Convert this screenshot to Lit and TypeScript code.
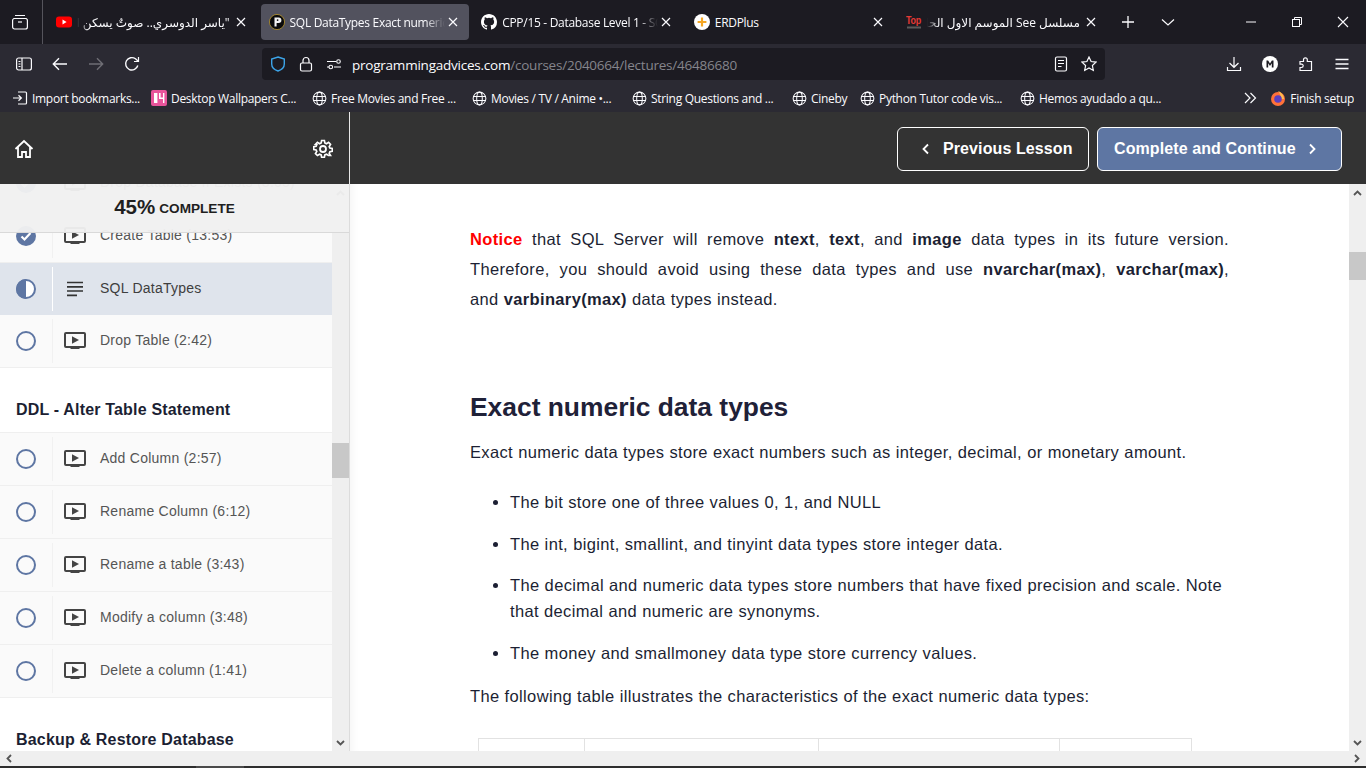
import { LitElement, html, css, svg } from 'lit'
import { customElement } from 'lit/decorators.js'

const globe = html`<svg class="fav globe" viewBox="0 0 16 16" fill="none" stroke="#fbfbfe" stroke-width="1.1"><circle cx="8" cy="8" r="6.8"/><ellipse cx="8" cy="8" rx="3" ry="6.8"/><path d="M1.4 5.800h13.200M1.400 10.200h13.200"/></svg>`
const closeX = html`<svg class="x" viewBox="0 0 10 10" fill="none" stroke="#fbfbfe" stroke-width="1.2"><path d="M1 1l8 8M9 1l-8 8"/></svg>`

const ytIcon = html`<svg class="fav" viewBox="0 0 16 16"><rect y="2.500" width="16" height="11" rx="3" fill="#f00"/><path d="M6.500 5.600v4.800L10.600 8z" fill="#fff"/></svg>`
const paIcon = html`<svg class="fav" viewBox="0 0 16 16"><circle cx="8" cy="8" r="7.600" fill="#0b0b0b" stroke="#b8962e" stroke-width=".8"/><path d="M5.500 3.500h4.200a2.600 2.600 0 010 5.400H7.600v3.600H5.500z" fill="#f2f2f2"/><circle cx="8.600" cy="6.100" r=".9" fill="#0b0b0b"/></svg>`
const ghIcon = html`<svg class="fav" viewBox="0 0 16 16" fill="#fff"><path d="M8 0C3.580 0 0 3.580 0 8c0 3.540 2.290 6.530 5.470 7.590.4.070.55-.17.55-.38 0-.19-.01-.82-.01-1.490-2.010.37-2.530-.49-2.690-.94-.09-.23-.48-.94-.82-1.130-.28-.15-.68-.52-.01-.53.63-.01 1.080.58 1.230.82.72 1.210 1.870.87 2.330.66.07-.52.28-.87.51-1.070-1.780-.2-3.640-.89-3.640-3.950 0-.87.31-1.590.82-2.150-.08-.2-.36-1.020.08-2.120 0 0 .67-.21 2.200.82a7.400 7.400 0 014 0c1.530-1.040 2.200-.82 2.200-.82.44 1.100.16 1.920.08 2.120.51.56.82 1.270.82 2.150 0 3.070-1.870 3.750-3.650 3.950.29.25.54.73.54 1.480 0 1.070-.01 1.930-.01 2.200 0 .21.15.46.55.38A8.010 8.010 0 0016 8c0-4.420-3.580-8-8-8z"/></svg>`
const erdIcon = html`<svg class="fav" viewBox="0 0 16 16"><circle cx="8" cy="8" r="8" fill="#fff"/><path d="M8 3.600v8.800M3.600 8h8.800" stroke="#f5a623" stroke-width="2.200"/></svg>`
const topIcon = html`<svg class="fav" viewBox="0 0 16 16"><text x="0" y="10" font-family="Liberation Sans" font-weight="700" font-size="11" fill="#e53935" textLength="15" lengthAdjust="spacingAndGlyphs">Top</text><rect x="1" y="12.500" width="14" height="2" fill="#5a5a5a"/></svg>`

const tabs = [
  { icon: ytIcon, title: '"ياسر الدوسري.. صوتٌ يسكن القلوب', rtl: true },
  { icon: paIcon, title: 'SQL DataTypes Exact numeric data types', active: true },
  { icon: ghIcon, title: 'CPP/15 - Database Level 1 - SQL Concepts' },
  { icon: erdIcon, title: 'ERDPlus' },
  { icon: topIcon, title: 'مسلسل See الموسم الاول الحلقة الاولى', rtl: true },
]

const marks = [
  { icon: html`<svg class="fav" viewBox="0 0 16 16" fill="none" stroke="#fbfbfe" stroke-width="1.2"><path d="M6 2h7.500a1 1 0 011 1v10a1 1 0 01-1 1H6M1 8h8M6.500 5.200L9.400 8l-2.900 2.800"/></svg>`, label: 'Import bookmarks...', w: 139 },
  { icon: html`<svg class="fav" viewBox="0 0 16 16"><rect width="16" height="16" rx="2" fill="#e8549b"/><path d="M3 3h3.400v10H3zM8 3h1.600v4.500H12V3h1.400v10H12V9H8z" fill="#fff"/></svg>`, label: 'Desktop Wallpapers C...', w: 161 },
  { icon: globe, label: 'Free Movies and Free ...', w: 160 },
  { icon: globe, label: 'Movies / TV / Anime •...', w: 160 },
  { icon: globe, label: 'String Questions and ...', w: 160 },
  { icon: globe, label: 'Cineby', w: 68 },
  { icon: globe, label: 'Python Tutor code vis...', w: 160 },
  { icon: globe, label: 'Hemos ayudado a qu...', w: 160 },
]

const playIcon = html`<svg class="lesson-icon" viewBox="0 0 22 20"><path d="M2 2h18a1 1 0 011 1v12a1 1 0 01-1 1H2a1 1 0 01-1-1V3a1 1 0 011-1z" fill="none" stroke="#444" stroke-width="2"/><path d="M8 5.200v7.600L15 9z" fill="#444"/><rect x="6.500" y="16" width="9" height="2" fill="#444"/></svg>`
const textIcon = html`<svg class="lesson-icon" viewBox="0 0 22 20"><path d="M3 3.500h16M3 7.800h16M3 12h16M3 16.300h10" stroke="#333" stroke-width="1.700"/></svg>`

type Lesson = { title: string; state?: 'done' | 'half'; kind?: 'text'; current?: boolean }

const statusIcon = (state?: string) => svg`<svg class="status" viewBox="0 0 20 20">
  ${state === 'done'
    ? svg`<circle cx="10" cy="10" r="10" fill="#5e76a3"/><path d="M5.500 10.500l3 3 6-6.500" fill="none" stroke="#fff" stroke-width="2.200"/>`
    : state === 'half'
      ? svg`<circle cx="10" cy="10" r="9" fill="#fff" stroke="#5e76a3" stroke-width="2"/><path d="M10 0a10 10 0 000 20z" fill="#5e76a3"/>`
      : svg`<circle cx="10" cy="10" r="9" fill="none" stroke="#5e76a3" stroke-width="2"/>`}
</svg>`

const firstGroup: Lesson[] = [
  { title: 'Drop Database If Exists (3:05)', state: 'done' },
  { title: 'Create Table (13:53)', state: 'done' },
  { title: 'SQL DataTypes', state: 'half', kind: 'text', current: true },
  { title: 'Drop Table (2:42)' },
]
const alterGroup: Lesson[] = [
  { title: 'Add Column (2:57)' },
  { title: 'Rename Column (6:12)' },
  { title: 'Rename a table (3:43)' },
  { title: 'Modify a column (3:48)' },
  { title: 'Delete a column (1:41)' },
]

@customElement('app-root')
export class AppRoot extends LitElement {
  static styles = css`
    :host {
      display: flex;
      flex-direction: column;
      width: 1366px;
      height: 768px;
      overflow: hidden;
      font-family: 'Liberation Sans', Arial, sans-serif;
      background: #fff;
    }
    svg { flex: none; display: block; }

    /* browser chrome */
    .chrome { font-family: 'Open Sans', 'Noto Sans', 'DejaVu Sans', sans-serif; color: #fbfbfe; font-size: 12px; letter-spacing: -.3px; }
    .tabbar { height: 44px; background: #1c1b22; display: flex; align-items: center; }
    .tab-view { width: 43px; height: 44px; display: flex; align-items: center; justify-content: center; border-right: 1px solid #55545c; box-sizing: border-box; padding-right: 2px; }
    .tab-view svg { width: 16px; height: 16px; }
    .tabs { display: flex; margin-left: 5px; }
    .tab { width: 212.600px; height: 36px; box-sizing: border-box; padding: 0 12px 0 8px; display: flex; align-items: center; gap: 5px; border-radius: 4px; }
    .tab.active { background: #52525e; margin-right: 4.600px; width: 208px; padding-right: 8px; }
    .fav { width: 16px; height: 16px; }
    .tab .title { flex: 1; white-space: nowrap; overflow: hidden; min-width: 0; -webkit-mask-image: linear-gradient(to left, transparent, #000 20px); mask-image: linear-gradient(to left, transparent, #000 20px); }
    .tab .title.rtl { direction: rtl; letter-spacing: 0; text-align: right; padding-right: 3px; -webkit-mask-image: linear-gradient(to right, transparent, #000 12px); mask-image: linear-gradient(to right, transparent, #000 12px); }
    .tab .title.short { -webkit-mask-image: none; mask-image: none; }
    .x { width: 10px; height: 10px; margin: 0 3px 0 -2px; }
    .tab-actions { display: flex; align-items: center; gap: 26px; margin-left: 10px; }
    .tab-actions svg { width: 14px; height: 14px; }
    .win { margin-left: auto; display: flex; }
    .win div { width: 46px; height: 44px; display: flex; align-items: center; justify-content: center; }
    .win svg { width: 12px; height: 12px; }

    .toolbar { height: 40px; background: #2b2a33; display: flex; align-items: center; }
    .nav { display: flex; align-items: center; width: 262px; padding-left: 16px; box-sizing: border-box; gap: 20px; }
    .nav svg { width: 16px; height: 16px; }
    .url { width: 843px; height: 32px; box-sizing: border-box; background: #1c1b22; border-radius: 4px; display: flex; align-items: center; padding: 0 8px; font-size: 13.500px; letter-spacing: -.23px; }
    .url .left { display: flex; align-items: center; gap: 12px; margin-right: 10px; }
    .url svg { width: 16px; height: 16px; }
    .address { padding-top: 1px; }
    .host { color: #fbfbfe; }
    .path { color: #85858c; }
    .url .right { margin-left: auto; display: flex; align-items: center; gap: 12px; }
    .tools { flex: 1; display: flex; justify-content: flex-end; gap: 20px; padding-right: 16px; align-items: center; }
    .tools svg { width: 16px; height: 16px; }

    .bookmarks { height: 28px; background: #2b2a33; display: flex; align-items: center; padding-left: 12px; }
    .mark { display: flex; align-items: center; gap: 4px; white-space: nowrap; overflow: hidden; }
    .marks-end { margin-left: auto; display: flex; align-items: center; padding-right: 12px; gap: 12px; }
    .mark .fav { width: 16px; height: 16px; }
    .mark .globe { width: 15px; height: 15px; }

    /* course header */
    .top { height: 72px; flex: none; background: #333; display: flex; }
    .side-top { width: 350px; box-sizing: border-box; border-right: 1px solid #e8e8e8; display: flex; align-items: center; justify-content: space-between; padding: 2px 16px 0 14px; }
    .side-top svg { width: 20px; height: 20px; }
    .top-btns { flex: 1; display: flex; justify-content: flex-end; align-items: center; gap: 8px; padding-right: 24px; padding-top: 2px; }
    .btn { height: 44px; box-sizing: border-box; border: 1px solid #fff; border-radius: 6px; display: flex; align-items: center; color: #fff; font-weight: 700; font-size: 16px; letter-spacing: .1px; }
    .btn svg { width: 10px; height: 12px; }
    .btn.prev { width: 192px; padding-left: 23px; gap: 12px; }
    .btn.next { width: 245px; background: #5e76a3; padding-left: 16px; gap: 11px; }

    /* body */
    .body { flex: 1; min-height: 0; display: flex; }
    .side { width: 350px; box-sizing: border-box; border-right: 1px solid #dcdcdc; display: flex; position: relative; overflow: hidden; }
    .list { width: 332px; flex: none; overflow: hidden; }
    .list-inner { margin-top: -27px; }
    .progress { position: absolute; left: 0; top: 0; width: 349px; height: 49px; box-sizing: border-box; background: rgba(240, 240, 240, .96); border-bottom: 1px solid #d9d9d9; display: flex; align-items: center; justify-content: center; gap: 4px; font-weight: 700; color: #1f1f1f; font-size: 20.500px; padding-bottom: 2px; }
    .progress small { font-size: 13.600px; margin-top: 3px; }
    .row { height: 53px; box-sizing: border-box; background: #fafafa; border-bottom: 1px solid #efefef; display: flex; align-items: center; color: #555; font-size: 14px; letter-spacing: .25px; }
    .row.current { height: 52px; background: #dfe4ec; color: #3e3e3e; border-bottom-color: #dfe4ec; }
    .row span { margin-bottom: 2px; }
    .status-cell { width: 53px; height: 44px; box-sizing: border-box; border-right: 1px solid #f1f1f1; display: flex; align-items: center; padding-left: 16px; }
    .row.current .status-cell { border-right-color: #fff; }
    .status { width: 20px; height: 20px; }
    .lesson-icon { width: 22px; height: 20px; margin: 0 14px 0 11px; }
    .section { height: 65px; box-sizing: border-box; padding: 33px 0 0 16px; font-weight: 700; font-size: 16px; letter-spacing: .18px; color: #1c1f33; background: #fff; border-bottom: 1px solid #efefef; }
    .section.last { border: none; padding-top: 33px; height: 90px; }

    .bar-v { width: 17px; flex: none; background: #efefef; display: flex; flex-direction: column; align-items: center; position: relative; }
    .bar-v .up, .bar-v .down { width: 17px; height: 17px; display: flex; align-items: center; justify-content: center; }
    .bar-v .down { margin-top: auto; }
    .bar-v svg { width: 9px; height: 6px; }
    .thumb { position: absolute; left: 0; width: 17px; background: #c8c8c8; }

    .main { flex: 1; min-width: 0; overflow: hidden; color: #1c1f33; font-size: 16.500px; letter-spacing: .35px; word-spacing: .2px; padding: 40px 120px 0 120px; box-shadow: inset 12px 0 12px -12px rgba(0,0,0,.06); }
    .main p { margin: 0; line-height: 30px; }
    .notice { text-align: justify; width: 759px; }
    .red { color: #f00; font-weight: 700; }
    .keep { white-space: nowrap; }
    h2 { font-size: 26.400px; letter-spacing: 0; word-spacing: 0; margin: 73px 0 0; line-height: 40px; font-weight: 700; color: #1f2138; }
    .main .lead { margin-top: 10px; }
    ul { margin: 22px 0 0; padding: 0 0 0 40px; width: 759px; box-sizing: border-box; }
    li { line-height: 26px; margin-bottom: 15.500px; }
    .table { margin: 27px 0 0 8px; width: 714px; display: grid; grid-template-columns: 105px 234px 241px 132px; border: 1px solid #e2e2e2; border-bottom: 0; height: 40px; box-sizing: border-box; }
    .table div + div { border-left: 1px solid #e2e2e2; }

    .bar-h { height: 15px; flex: none; background: #efefef; display: flex; align-items: center; justify-content: space-between; padding: 0 6px; }
    .bar-h svg { width: 6px; height: 9px; }
    .edge { height: 2px; flex: none; background: #2e2e2e; padding-left: 196px; }
    .edge div { width: 48px; height: 2px; background: #4a4a4a; }
  `

  private lessonRow(l: Lesson) {
    return html`<div class="row ${l.current ? 'current' : ''}">
      <div class="status-cell">${statusIcon(l.state)}</div>
      ${l.kind === 'text' ? textIcon : playIcon}
      <span>${l.title}</span>
    </div>`
  }

  private chrome() {
    return html`<div class="chrome">
      <div class="tabbar">
        <div class="tab-view"><svg viewBox="0 0 16 16" fill="none" stroke="#fbfbfe" stroke-width="1.2"><path d="M3 1.500h10M1.600 4.500h12.800"/><rect x=".6" y="4.500" width="14.800" height="10.500" rx="2"/><path d="M6 8h4"/></svg></div>
        <div class="tabs">
          ${tabs.map(t => html`<div class="tab ${t.active ? 'active' : ''}">
            ${t.icon}<span class="title ${t.rtl ? 'rtl' : ''} ${t.title === 'ERDPlus' ? 'short' : ''}">${t.title}</span>${closeX}
          </div>`)}
        </div>
        <div class="tab-actions">
          <svg viewBox="0 0 14 14" fill="none" stroke="#fbfbfe" stroke-width="1.300"><path d="M7 1v12M1 7h12"/></svg>
          <svg viewBox="0 0 14 14" fill="none" stroke="#fbfbfe" stroke-width="1.200"><path d="M1 4.500l6 5.500 6-5.500"/></svg>
        </div>
        <div class="win">
          <div><svg viewBox="0 0 12 12" stroke="#fbfbfe" fill="none"><path d="M1 6h10"/></svg></div>
          <div><svg viewBox="0 0 12 12" stroke="#fbfbfe" fill="none"><rect x="1.500" y="3.500" width="7" height="7"/><path d="M3.500 3.500v-2h7v7h-2" stroke="#fbfbfe"/></svg></div>
          <div><svg viewBox="0 0 12 12" stroke="#fbfbfe" fill="none" stroke-width="1.100"><path d="M1 1l10 10M11 1L1 11"/></svg></div>
        </div>
      </div>
      <div class="toolbar">
        <div class="nav">
          <svg viewBox="0 0 16 16" fill="none" stroke="#fbfbfe" stroke-width="1.200"><rect x=".6" y="2" width="14.800" height="12" rx="2"/><path d="M6 2v12M2.500 5.500h2M2.500 8h2M2.500 10.500h2"/></svg>
          <svg viewBox="0 0 16 16" fill="none" stroke="#fbfbfe" stroke-width="1.400"><path d="M15 8H1.500M7 2.200L1.300 8 7 13.800"/></svg>
          <svg viewBox="0 0 16 16" fill="none" stroke="#6f6e75" stroke-width="1.400"><path d="M1 8h13.500M9 2.200L14.700 8 9 13.800"/></svg>
          <svg viewBox="0 0 16 16" fill="none" stroke="#fbfbfe" stroke-width="1.400"><path d="M13.800 9.500A6.200 6.200 0 1111.500 2.800L14 5"/><path d="M14.500 1v4.500H10" stroke-width="1.200"/></svg>
        </div>
        <div class="url">
          <div class="left">
            <svg viewBox="0 0 16 16" fill="none" stroke="#3ca4e8" stroke-width="1.400"><path d="M8 1l6.300 2v5c0 3.500-2.700 5.800-6.300 7-3.600-1.200-6.300-3.500-6.300-7V3z"/></svg>
            <svg viewBox="0 0 16 16" fill="none" stroke="#fbfbfe" stroke-width="1.200"><rect x="2.500" y="7" width="11" height="8" rx="1.500"/><path d="M5 7V4.500a3 3 0 016 0V7"/></svg>
            <svg viewBox="0 0 16 16" fill="none" stroke="#fbfbfe" stroke-width="1.100"><path d="M1 5.500h9M1 11h2M8 11h7"/><circle cx="12.500" cy="5.500" r="1.800"/><circle cx="4.800" cy="11" r="1.800"/></svg>
          </div>
          <span class="address"><span class="host">programmingadvices.com</span><span class="path">/courses/2040664/lectures/46486680</span></span>
          <div class="right">
            <svg viewBox="0 0 16 16" fill="none" stroke="#fbfbfe" stroke-width="1.200"><rect x="2.500" y="1" width="11" height="14" rx="1.500"/><path d="M5 4.500h6M5 7.500h6M5 10.500h3.500"/></svg>
            <svg viewBox="0 0 16 16" fill="none" stroke="#fbfbfe" stroke-width="1.200"><path d="M8 1l2.100 4.500 4.900.6-3.600 3.400.9 4.900L8 11.900l-4.300 2.500.9-4.900L1 6.100l4.900-.6z"/></svg>
          </div>
        </div>
        <div class="tools">
          <svg viewBox="0 0 16 16" fill="none" stroke="#fbfbfe" stroke-width="1.200"><path d="M8 1v10M3.500 7L8 11.300 12.500 7M1.500 11v3.500h13V11"/></svg>
          <svg viewBox="0 0 16 16"><circle cx="8" cy="8" r="8" fill="#fff"/><path d="M4.500 11.500v-7h1.600L8 7.500l1.900-3h1.600v7H9.800V7.300L8 10 6.200 7.300v4.200z" fill="#1c1b22"/></svg>
          <svg viewBox="0 0 16 16" fill="none" stroke="#fbfbfe" stroke-width="1.200"><path d="M2 5.500h3.500V3.800a1.900 1.900 0 013.800 0v1.700h4.200v9H2v-3h1.500a1.700 1.700 0 000-3.400H2z"/></svg>
          <svg viewBox="0 0 16 16" fill="none" stroke="#fbfbfe" stroke-width="1.300"><path d="M1.500 3.500h13M1.500 8h13M1.500 12.500h13"/></svg>
        </div>
      </div>
      <div class="bookmarks">
        ${marks.map(m => html`<div class="mark" style="width:${m.w}px">${m.icon}<span>${m.label}</span></div>`)}
        <div class="marks-end">
          <svg class="fav" viewBox="0 0 16 16" fill="none" stroke="#fbfbfe" stroke-width="1.200"><path d="M3 3l5 5-5 5M8.500 3l5 5-5 5"/></svg>
          <div class="mark">
            <svg class="fav" viewBox="0 0 16 16"><circle cx="8" cy="9" r="7" fill="#ff7139"/><path d="M8 1c3 1 6 4 6 8h-3C11 6 10 3 8 1z" fill="#ffbd4f"/><circle cx="8" cy="9" r="3.800" fill="#5a3fc0"/></svg>
            <span>Finish setup</span>
          </div>
        </div>
      </div>
    </div>`
  }

  render() {
    const chevUp = html`<svg viewBox="0 0 9 6" fill="none" stroke="#555" stroke-width="1.800"><path d="M1 5l3.500-3.500L8 5"/></svg>`
    const chevDown = html`<svg viewBox="0 0 9 6" fill="none" stroke="#555" stroke-width="1.800"><path d="M1 1l3.500 3.500L8 1"/></svg>`
    return html`
      ${this.chrome()}
      <div class="top">
        <div class="side-top">
          <svg viewBox="0 0 20 20" fill="none" stroke="#fff" stroke-width="1.800"><path d="M1.500 10L10 2l8.500 8M4 8v10h4v-5h4v5h4V8"/></svg>
          <svg viewBox="0 0 20 20" fill="none" stroke="#fff" stroke-width="1.800"><circle cx="10" cy="10" r="3"/><path d="M8.500 1h3l.5 2.600 1.700.8L16 3l2.100 2.200-1.400 2.200.7 1.700 2.600.5v3l-2.600.5-.7 1.700 1.400 2.200L16 17.100l-2.300-1.400-1.700.7-.5 2.600h-3l-.5-2.600-1.700-.7L4 17.100 1.900 15l1.400-2.200-.7-1.700L0 10.600v-3l2.600-.5.700-1.700L1.900 5.200 4 3l2.300 1.400 1.700-.8z" transform="translate(.7 .6) scale(.93)"/></svg>
        </div>
        <div class="top-btns">
          <div class="btn prev"><svg viewBox="0 0 10 12" fill="none" stroke="#fff" stroke-width="1.800"><path d="M7 1.500L2.500 6 7 10.500"/></svg>Previous Lesson</div>
          <div class="btn next">Complete and Continue<svg viewBox="0 0 10 12" fill="none" stroke="#fff" stroke-width="1.800"><path d="M3 1.500L7.500 6 3 10.500"/></svg></div>
        </div>
      </div>
      <div class="body">
        <div class="side">
          <div class="list"><div class="list-inner">
            ${firstGroup.map(l => this.lessonRow(l))}
            <div class="section">DDL - Alter Table Statement</div>
            ${alterGroup.map(l => this.lessonRow(l))}
            <div class="section last">Backup &amp; Restore Database</div>
          </div></div>
          <div class="bar-v">
            <div class="up">${chevUp}</div>
            <div class="thumb" style="top:259px;height:35px"></div>
            <div class="down">${chevDown}</div>
          </div>
          <div class="progress">45%<small>COMPLETE</small></div>
        </div>
        <div class="main">
          <p class="notice"><span class="red">Notice</span> that SQL Server will remove <b>ntext</b>, <b>text</b>, and <b>image</b> data types in its future version. Therefore, you should avoid using these data types and use <b>nvarchar(max)</b>, <b>varchar(max)</b>, <span class="keep">and <b>varbinary(max)</b></span> data types instead.</p>
          <h2>Exact numeric data types</h2>
          <p class="lead">Exact numeric data types store exact numbers such as integer, decimal, or monetary amount.</p>
          <ul>
            <li>The bit store one of three values 0, 1, and NULL</li>
            <li>The int, bigint, smallint, and tinyint data types store integer data.</li>
            <li>The decimal and numeric data types store numbers that have fixed precision and scale. Note that decimal and numeric are synonyms.</li>
            <li>The money and smallmoney data type store currency values.</li>
          </ul>
          <p>The following table illustrates the characteristics of the exact numeric data types:</p>
          <div class="table"><div></div><div></div><div></div><div></div></div>
        </div>
        <div class="bar-v">
          <div class="up">${chevUp}</div>
          <div class="thumb" style="top:68px;height:28px"></div>
          <div class="down">${chevDown}</div>
        </div>
      </div>
      <div class="bar-h">
        <svg viewBox="0 0 6 9" fill="none" stroke="#555" stroke-width="1.800"><path d="M5 1L1.500 4.500 5 8"/></svg>
        <svg viewBox="0 0 6 9" fill="none" stroke="#555" stroke-width="1.800"><path d="M1 1l3.500 3.500L1 8"/></svg>
      </div>
      <div class="edge"><div></div></div>
    `
  }
}
